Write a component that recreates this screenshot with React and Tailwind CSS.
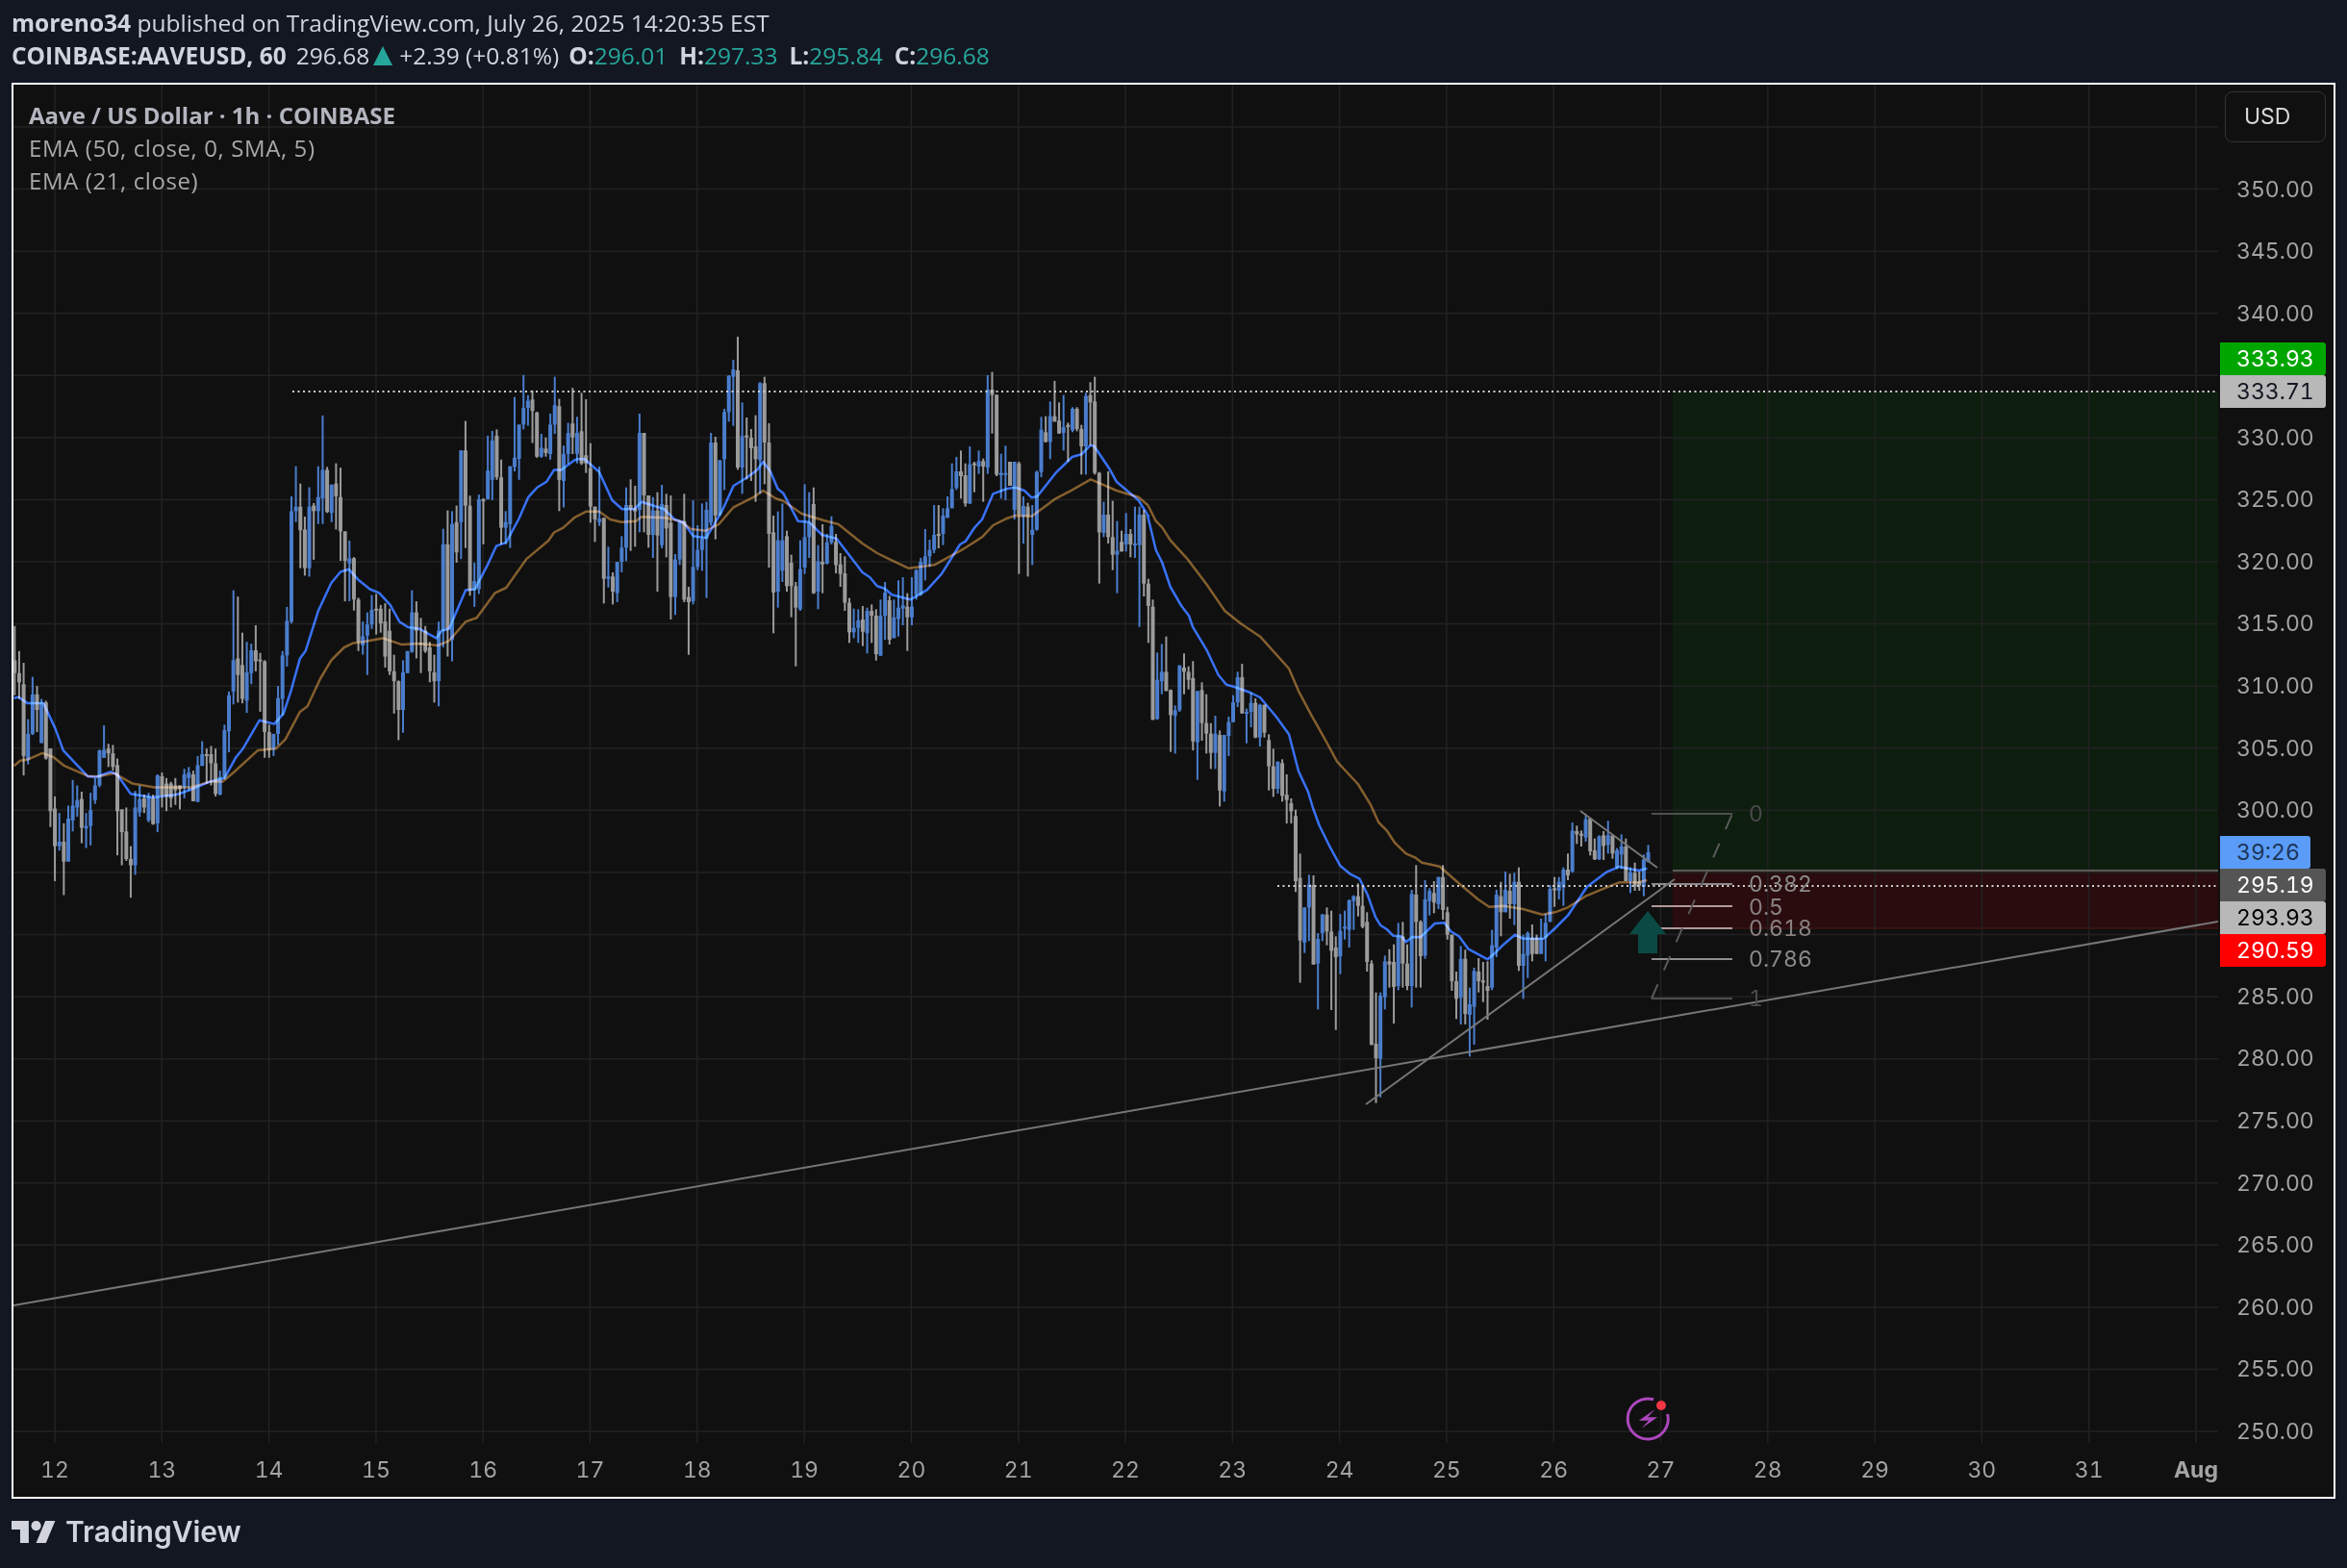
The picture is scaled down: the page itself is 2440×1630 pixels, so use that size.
import React from 'react';

// candles read off the chart: [x, high, bodyTop, bodyBottom, low, up]
const segA = [
  [40,812,905,940,1000,0],[52,880,940,965,1010,0],[65,912,970,1165,1218,0],[78,1065,1105,1175,1188,1],[89,950,998,1105,1108,1],[101,975,998,1040,1100,0],
  [114,1010,1020,1130,1130,1],[126,1015,1020,1172,1175,0],[138,1145,1145,1315,1358,0],[150,1275,1308,1410,1505,0],[162,1320,1398,1410,1422,1],[175,1348,1398,1452,1543,0],
  [186,1300,1335,1452,1452,1],[198,1230,1300,1340,1370,1],[210,1245,1285,1305,1330,1],[222,1262,1282,1360,1402,0],[235,1320,1355,1362,1415,1],[247,1265,1312,1355,1408,1],
  [259,1225,1245,1285,1295,1],[271,1148,1150,1245,1250,1],[282,1082,1148,1170,1170,1],[295,1132,1145,1158,1195,0],[308,1135,1158,1195,1205,0],[319,1172,1190,1315,1435,0],
  [332,1310,1310,1372,1462,0],[344,1305,1370,1445,1450,0],[356,1410,1445,1462,1550,0],[368,1260,1305,1462,1488,1],[381,1245,1282,1318,1330,1],[392,1270,1280,1305,1320,0],
  [405,1265,1275,1340,1345,1],[416,1270,1280,1350,1352,0],[428,1215,1218,1348,1372,1],[441,1210,1220,1272,1305,0],[452,1225,1240,1275,1315,0],[464,1235,1240,1280,1305,0],
  [476,1225,1245,1258,1298,0],[488,1245,1245,1255,1310,0],[500,1200,1215,1250,1280,1],[513,1195,1210,1225,1260,1],[525,1205,1215,1288,1288,0],[538,1165,1190,1290,1290,1],
  [549,1125,1160,1192,1192,1],[562,1145,1160,1165,1240,0],[574,1138,1160,1185,1245,0],[586,1145,1185,1268,1275,0],[598,1205,1222,1270,1272,1],[611,1080,1095,1222,1228,1],
  [623,990,1000,1098,1155,1],[635,715,905,990,1025,1],[647,732,900,945,1020,0],[659,830,918,1010,1022,0],[671,855,938,1015,1048,1],[683,860,878,940,970,1],
  [695,810,878,908,935,0],[707,885,903,907,1045,0],[719,905,908,1100,1170,0],[731,1080,1100,1148,1170,0],[744,1105,1105,1145,1165,1],[755,975,1008,1105,1135,1],
  [768,880,892,1010,1055,1],[781,760,798,892,922,1],[792,460,500,800,805,1],[804,378,488,500,530,1],[815,425,488,552,655,0],[828,515,550,655,675,0],
  [840,435,488,655,678,1],[852,478,485,500,632,0],[865,378,462,500,535,1],[878,240,388,465,535,1],[890,380,388,502,505,0],[902,428,428,505,530,1],
  [915,370,425,460,550,0],[927,382,462,555,635,0],[939,555,555,635,745,0],[950,580,628,642,745,1],[962,625,628,740,770,0],[975,735,740,855,880,0],
  [987,800,840,865,890,1],[998,775,808,838,945,1],[1010,728,768,808,820,1],[1022,725,765,770,835,0],[1035,755,765,805,830,0],[1048,750,800,895,925,0],
  [1059,765,825,935,945,0],[1071,890,935,962,1050,0],[1083,960,962,1040,1122,0],[1095,905,938,1040,1102,1],[1108,880,880,940,940,1],[1119,715,775,882,885,1],
  [1131,745,775,825,900,0],[1144,790,858,860,940,0],[1155,812,825,880,885,0],[1167,855,870,935,965,0],[1180,890,938,962,1020,0],[1192,800,825,962,1030,1],
  [1203,548,590,825,870,1],[1215,498,590,820,895,0],[1228,500,535,850,908,1],[1240,485,530,612,640,0],[1252,335,335,530,630,1],[1264,255,335,485,600,0],
  [1277,458,485,715,730,0],[1288,640,690,715,760,1],[1301,455,468,712,725,1],[1313,465,468,470,590,0],[1325,295,390,468,468,1],[1336,282,308,415,470,1],
  [1349,278,295,408,415,0],[1361,360,408,545,590,0],[1373,500,530,545,590,1],[1385,378,378,535,600,1],[1397,190,355,380,392,1],[1409,265,265,358,415,1],
  [1421,130,220,265,278,1],[1433,185,200,220,268,1],[1445,172,197,228,315,0],[1457,230,232,352,355,0],[1470,290,328,352,355,1],[1482,300,330,342,352,0],
  [1494,235,265,345,360,1],[1507,135,212,265,290,1],[1519,195,215,415,500,0],[1531,322,345,418,490,1],[1543,260,288,345,372,1],[1555,165,262,300,345,0],
];

const segB = [
  [0,280,330,395,425,1],[12,205,325,425,430,0],[24,225,400,425,455,0],[36,362,440,560,610,0],[48,560,560,600,670,0],[60,435,598,608,620,1],
  [72,595,595,785,862,0],[84,685,778,785,812,1],[96,765,778,825,865,0],[108,732,732,830,858,1],[120,652,688,732,765,1],[132,500,555,688,730,1],
  [145,475,555,568,698,0],[157,495,565,575,685,0],[170,270,330,570,640,1],[180,330,330,525,640,0],[193,525,525,648,688,0],[205,530,572,648,720,1],
  [217,515,572,650,825,0],[229,492,552,680,690,1],[241,520,555,628,718,0],[254,525,610,842,912,0],[266,708,725,842,898,1],[278,605,605,725,742,1],
  [290,520,605,850,858,0],[303,810,842,858,1022,0],[314,540,748,855,865,1],[326,618,695,748,758,1],[339,550,660,695,760,1],[350,545,570,660,845,1],
  [363,330,360,610,620,1],[376,342,360,588,662,0],[387,415,415,585,590,1],[400,255,265,412,508,1],[413,150,152,265,295,1],[424,102,132,155,308,1],
  [436,30,135,438,445,0],[447,235,340,438,520,1],[459,282,338,342,475,0],[472,318,345,378,480,0],[484,275,372,412,545,0],[497,172,175,415,520,1],
  [510,155,175,360,490,0],[520,300,360,645,750,0],[533,588,640,828,955,0],[546,575,665,825,875,1],[556,550,665,760,795,1],[569,635,652,808,825,0],
  [581,710,735,808,905,0],[593,795,808,875,1058,0],[606,665,755,880,885,1],[617,490,655,750,770,1],[630,515,610,655,720,1],[642,500,552,830,832,0],
  [654,680,730,825,880,1],[667,615,732,740,830,0],[680,645,672,738,740,1],[690,590,620,672,678,1],[703,645,670,742,768,0],[715,705,740,770,810,0],
  [727,715,768,860,885,0],[739,845,860,952,985,0],[750,878,938,952,970,1],[763,880,915,938,985,1],[776,870,912,950,995,0],[787,875,885,955,1018,1],
  [800,865,885,900,985,0],[812,880,900,1020,1040,0],[823,850,900,1025,1025,1],[836,795,828,900,975,1],[847,838,852,975,990,0],[860,850,905,970,970,1],
  [872,790,875,910,965,1],[884,780,868,878,930,1],[896,830,872,905,1010,0],[908,780,872,905,930,1],[920,755,758,835,850,1],[932,720,732,835,838,1],
  [945,630,715,740,790,1],[956,663,695,715,748,1],[968,555,648,695,705,1],[980,555,645,650,690,0],[993,565,588,645,680,1],[1005,528,565,595,595,1],
  [1017,425,505,565,565,1],[1029,405,450,502,508,1],[1042,385,450,465,535,0],[1053,425,462,550,560,0],[1065,372,428,550,552,1],[1079,420,425,428,515,0],
  [1090,385,418,435,458,1],[1103,410,418,435,545,0],[1113,150,195,438,458,1],[1126,140,195,212,332,0],[1138,210,212,460,465,0],[1150,395,455,462,535,1],
  [1162,370,455,460,540,1],[1176,420,420,495,495,0],[1187,420,420,570,600,1],[1199,420,425,585,770,0],[1212,528,558,590,675,1],[1224,548,560,590,778,0],
  [1236,555,632,648,742,1],[1246,448,452,632,635,1],[1259,280,320,452,468,1],[1272,278,328,358,360,0],[1284,232,278,358,412,1],[1296,168,278,295,295,0],
  [1308,235,292,332,332,0],[1320,212,312,330,385,1],[1332,298,305,312,420,0],[1345,250,255,322,328,1],[1357,250,255,318,325,0],[1369,305,318,372,460,0],
  [1380,205,215,372,460,1],[1393,172,212,235,370,0],[1405,155,232,455,460,0],[1417,452,455,640,800,0],[1430,545,585,642,655,1],[1442,450,585,655,675,0],
  [1453,542,655,710,758,0],[1465,605,698,710,830,1],[1478,635,670,700,700,0],[1490,580,645,678,700,1],[1502,630,645,678,718,0],[1514,560,675,678,720,1],
  [1527,560,585,680,935,1],[1539,570,585,800,840,0],[1551,785,800,870,985,0],[1563,850,872,1225,1225,0],
];

const segC = [
  [308,1015,1100,1222,1225,1],[321,988,1075,1105,1145,1],[335,965,1075,1135,1135,0],[350,1130,1132,1210,1325,0],[363,1180,1195,1212,1330,1],[378,1055,1055,1195,1200,1],
  [390,1018,1062,1075,1145,0],[405,1058,1075,1100,1130,0],[419,1042,1095,1292,1320,0],[432,1135,1135,1295,1412,1],[446,1108,1132,1235,1290,0],[462,1145,1235,1268,1330,0],
  [474,1235,1268,1328,1378,0],[489,1212,1268,1328,1378,1],[503,1258,1272,1445,1495,0],[516,1272,1272,1448,1480,1],[530,1215,1232,1275,1338,1],[543,1148,1170,1232,1232,1],
  [558,1075,1092,1170,1185,1],[572,1050,1092,1205,1205,0],[585,1190,1200,1205,1298,1],[600,1140,1172,1200,1248,1],[614,1158,1172,1280,1282,0],[628,1175,1178,1280,1308,1],
  [642,1178,1178,1265,1280,0],[657,1270,1288,1370,1445,0],[670,1315,1370,1440,1465,0],[684,1355,1355,1440,1455,1],[696,1348,1360,1462,1480,0],
];

const segD = [
  [110,15,78,95,168,0],[124,90,105,130,168,0],[138,125,145,348,382,0],[152,262,338,533,665,0],[167,430,430,540,572,1],[180,328,358,430,535,1],
  [194,330,360,608,608,0],[209,510,528,605,748,1],[222,450,452,510,535,1],[236,430,452,505,548,0],[249,440,505,565,750,0],[264,520,555,585,812,0],
  [278,450,503,582,638,1],[292,440,490,495,530,1],[306,405,408,500,555,1],[320,392,395,410,500,1],[334,355,395,425,458,0],[348,360,425,490,495,0],
  [362,445,475,600,630,0],[376,595,605,858,860,0],[389,695,855,900,1040,0],[402,695,705,902,1022,1],[416,580,598,710,748,1],[431,560,598,608,680,0],
  [444,545,600,678,792,0],[459,478,520,675,688,1],[473,475,520,605,680,0],[486,545,605,675,688,0],[500,375,388,675,742,1],[515,298,390,475,680,0],
  [528,470,475,582,680,0],[542,345,405,580,590,1],[555,370,378,410,455,1],[570,348,385,415,448,0],[584,335,335,420,435,1],[597,298,335,438,468,0],
  [612,428,445,515,530,0],[626,515,515,660,690,0],[640,630,660,715,778,0],[654,550,590,712,795,1],[668,562,590,762,795,0],[682,680,732,765,895,1],
  [695,618,628,740,858,1],[708,588,630,660,695,0],[722,600,658,662,725,0],[737,598,675,690,780,0],[749,500,548,680,688,1],[764,375,390,555,585,1],
  [778,350,395,445,520,0],[792,318,375,445,445,1],[806,325,378,420,465,0],[820,322,350,420,485,1],[834,305,350,612,628,0],[848,515,575,612,715,1],
  [861,505,510,580,650,1],[875,483,525,575,598,0],[890,515,525,575,575,0],[903,465,525,575,575,1],[917,450,478,525,598,1],[932,360,372,475,475,1],
  [945,335,370,375,428,0],[960,335,350,378,405,1],[973,305,312,368,425,1],[987,262,312,330,345,0],[1001,165,190,318,322,1],[1014,175,192,202,232,0],
  [1028,190,200,205,240,0],[1043,138,155,212,225,1],[1056,150,152,255,268,0],[1070,215,252,280,282,0],[1085,205,208,280,282,1],[1098,192,205,238,282,0],
  [1112,160,205,235,262,1],[1126,205,205,262,278,0],[1140,245,252,305,310,1],[1154,202,240,265,310,1],[1167,215,240,348,348,0],[1182,305,320,348,385,1],
  [1196,290,322,365,378,0],[1210,318,350,362,378,0],[1224,265,280,365,395,1],[1239,235,258,288,290,1],
];

const toPage = (ox, oy, sx, sy, rows) =>
  rows.map(([x, h, t, b, l, up]) => ({
    x: 15.3 + 4.64 * Math.round((ox + x / sx - 15.3) / 4.64),
    h: oy + h / sy,
    t: oy + t / sy,
    b: oy + b / sy,
    l: oy + l / sy,
    up,
  }));

const candles = [
  ...toPage(0, 340, 2.613, 2.613, segA),
  ...toPage(600, 340, 2.613, 3, segB),
  ...toPage(1100, 340, 3, 3, segC),
  ...toPage(1300, 800, 3, 3, segD),
];

const pts = (ox, oy, sx, sy, rows) => rows.map(([x, y]) => `${(ox + x / sx).toFixed(1)},${(oy + y / sy).toFixed(1)}`).join(' ');

const ema50 = [
  pts(0, 340, 2.613, 2.613, [[38,1008],[50,1005],[75,1022],[118,1022],[150,1090],[172,1150],[238,1220],[262,1222],[300,1208],[318,1215],[355,1268],[415,1278],[480,1270],[515,1258],[570,1235],[610,1225],[640,1170],[660,1145],[705,1068],[745,1078],[770,1050],[790,990],[815,900],[830,880],[865,770],[900,695],[925,665],[948,658],[975,688],[1005,712],[1030,722],[1060,755],[1085,800],[1108,815],[1140,820],[1185,845],[1200,825],[1220,820],[1265,715],[1290,712],[1325,645],[1348,595],[1375,585],[1410,520],[1435,462],[1460,435],[1485,420],[1505,388],[1525,388],[1560,362]]),
  pts(600, 340, 2.613, 3, [[0,412],[20,412],[60,452],[95,540],[122,568],[155,568],[175,545],[235,567],[265,600],[290,610],[315,652],[350,658],[370,620],[395,570],[425,495],[460,470],[490,445],[505,420],[525,450],[545,505],[560,518],[600,605],[630,608],[665,648],[705,660],[735,705],[775,765],[795,780],[815,808],[835,815],[855,835],[905,850],[950,820],[990,770],[1040,678],[1055,668],[1080,625],[1100,600],[1130,520],[1165,505],[1190,500],[1215,510],[1235,532],[1250,528],[1300,455],[1345,405],[1370,397],[1395,368],[1405,372],[1445,440],[1465,482],[1525,540],[1552,590]]),
  pts(1100, 340, 3, 3, [[280,590],[305,695],[325,735],[350,810],[385,870],[408,900],[420,935],[465,1010],[500,1085],[525,1115],[550,1122],[600,1140],[630,1155],[680,1215],[720,1270],[750,1385],[780,1450]]),
  pts(1300, 800, 3, 3, [[195,120],[215,175],[250,245],[280,300],[310,325],[340,340],[365,390],[390,460],[405,485],[425,498],[445,518],[470,520],[485,538],[505,522],[530,523],[575,480],[605,478],[625,505],[650,520],[680,560],[740,592],[765,570],[790,545],[825,515],[850,527],[915,527],[950,495],[990,455],[1020,410],[1050,365],[1110,320],[1150,303],[1210,315],[1237,308]]),
].join(' ');

const ema21 = [
  pts(0, 340, 2.613, 2.613, [[38,1192],[55,1178],[75,1175],[115,1157],[145,1168],[175,1192],[240,1220],[270,1220],[310,1212],[360,1240],[420,1250],[520,1250],[570,1235],[605,1235],[640,1205],[700,1150],[750,1145],[775,1120],[815,1045],[835,1030],[870,955],[900,905],[935,870],[960,858],[985,855],[1040,845],[1090,862],[1140,860],[1190,865],[1220,852],[1265,800],[1295,790],[1345,722],[1375,708],[1430,630],[1490,580],[1505,558],[1530,545],[1560,518]]),
  pts(600, 340, 2.613, 3, [[0,590],[25,575],[60,575],[90,600],[120,608],[160,605],[175,592],[240,595],[280,605],[310,630],[350,635],[385,615],[425,562],[480,530],[505,510],[540,535],[560,542],[610,582],[670,603],[710,615],[775,675],[815,705],[850,725],[900,752],[970,742],[1045,695],[1100,655],[1130,618],[1165,598],[1190,588],[1235,590],[1300,535],[1345,508],[1395,475],[1465,510],[1525,530],[1550,555]]),
  pts(1100, 340, 3, 3, [[280,555],[305,605],[325,625],[350,665],[405,725],[465,805],[520,885],[570,925],[630,965],[720,1065],[750,1135],[790,1210],[835,1290],[870,1355]]),
  pts(1300, 800, 3, 3, [[293,0],[335,45],[375,110],[400,165],[425,190],[450,228],[485,262],[515,275],[535,290],[590,302],[650,355],[710,405],[745,428],[790,425],[850,435],[910,452],[950,445],[990,430],[1045,395],[1110,368],[1150,352],[1210,352],[1237,345]]),
].join(' ');

// empty rows are the ticks hidden behind the price badges
const priceTicks = ['350.00','345.00','340.00','','330.00','325.00','320.00','315.00','310.00','305.00','300.00','','','285.00','280.00','275.00','270.00','265.00','260.00','255.00','250.00'];
const days = ['12','13','14','15','16','17','18','19','20','21','22','23','24','25','26','27','28','29','30','31','Aug'];
const fibLevels = [
  { y: 846, c: '#4f4f4f' },
  { y: 919, c: '#8a8a8a' },
  { y: 942, c: '#b09a9a' },
  { y: 965, c: '#b09a9a' },
  { y: 997, c: '#8f8f8f' },
  { y: 1038, c: '#4f4f4f' },
];

function ChartDrawing() {
  return (
    <svg className="block" width="2292" height="1412" viewBox="14 88 2292 1412">
      <rect x="1739" y="407" width="567" height="498" fill="#0d1e0e" />
      <rect x="1739" y="905" width="567" height="60" fill="#2a0c0e" />
      {days.map((d, i) => (
        <line key={d} x1={57 + 111.3 * i} x2={57 + 111.3 * i} y1="88" y2="1500" stroke="#222222" strokeWidth="1.5" />
      ))}
      {Array.from({ length: 22 }, (_, i) => (
        <line key={i} x1="14" x2="2306" y1={132 + 64.575 * i} y2={132 + 64.575 * i} stroke="#222222" strokeWidth="1.5" />
      ))}
      <line x1="1739" x2="2306" y1="905" y2="905" stroke="#5c5a56" strokeWidth="2" />
      <line x1="1739" x2="2306" y1="965" y2="965" stroke="#3f1416" strokeWidth="1.5" />
      {candles.map((c, i) => {
        const col = c.up ? '#4a7dcc' : '#9b9b9b';
        return (
          <g key={i} fill={col}>
            <rect x={c.x - 1} y={c.h} width="2" height={Math.max(c.l - c.h, 1)} />
            <rect x={c.x - 2} y={c.t} width="4" height={Math.max(c.b - c.t, 2)} />
          </g>
        );
      })}
      <polyline className="mix-blend-screen" points={ema21} fill="none" stroke="#7c5420" strokeWidth="2.5" strokeLinejoin="round" />
      <polyline className="mix-blend-screen" points={ema50} fill="none" stroke="#2b68f5" strokeWidth="2.5" strokeLinejoin="round" />
      <line x1="304" x2="2306" y1="407" y2="407" stroke="#cfcfcf" strokeWidth="2" strokeDasharray="2 3.5" />
      <line x1="1328" x2="2306" y1="921" y2="921" stroke="#cfcfcf" strokeWidth="2" strokeDasharray="2 3.5" />
      {fibLevels.map((l) => (
        <line key={l.y} x1="1717" x2="1801" y1={l.y} y2={l.y} stroke={l.c} strokeWidth="2" />
      ))}
      <line x1="1717" y1="1038" x2="1801" y2="846" stroke="#5a5a5a" strokeWidth="2" strokeDasharray="16 16" />
      <line x1="14" y1="1357" x2="2306" y2="958" stroke="#767676" strokeWidth="2" />
      <line x1="1420" y1="1148" x2="1741" y2="914" stroke="#767676" strokeWidth="2" />
      <line x1="1643" y1="843" x2="1723" y2="902" stroke="#767676" strokeWidth="2" />
      <polygon points="1713,947 1732,971 1723,971 1723,991 1703,991 1703,971 1694,971" fill="#0b4a44" />
      <path d="M1719 1454.8A21 21 0 1 0 1733.6 1470" fill="none" stroke="#ab47bc" strokeWidth="3" />
      <polygon points="1720.6,1465 1703.8,1476.7 1714,1476.7 1706.3,1485 1723.2,1473.3 1713,1473.3" fill="#ab47bc" />
      <circle cx="1727" cy="1461" r="5" fill="#f23645" />
    </svg>
  );
}

export default function App() {
  return (
    <div className="w-[2440px] h-[1630px] bg-[#131722] text-[#d1d4dc] overflow-hidden font-['Open_Sans',sans-serif]">
      {/* published-by header */}
      <header className="pl-3 pt-[7px] h-[86px] text-[24.5px] leading-[34px]">
        <div><b className="font-bold">moreno34</b> published on TradingView.com, July 26, 2025 14:20:35 EST</div>
        <div className="flex items-center whitespace-pre">
          <b className="font-bold">COINBASE:AAVEUSD, 60</b>
          <span className="ml-[10px]">296.68</span>
          <svg className="ml-[4px] mr-[7px]" width="20" height="20" viewBox="0 0 20 20"><polygon points="10,0 20,20 0,20" fill="#26a69a" /></svg>
          <span>+2.39 (+0.81%)</span>
          <b className="font-bold ml-[10px]">O:</b><span className="text-[#26a69a]">296.01</span>
          <b className="font-bold ml-[12px]">H:</b><span className="text-[#26a69a]">297.33</span>
          <b className="font-bold ml-[12px]">L:</b><span className="text-[#26a69a]">295.84</span>
          <b className="font-bold ml-[12px]">C:</b><span className="text-[#26a69a]">296.68</span>
        </div>
      </header>

      {/* chart frame */}
      <div className="mx-3 border-2 border-white bg-[#101010] h-[1472px] flex flex-col font-['Inter',sans-serif] text-[23px] tabular-nums">
        <div className="flex h-[1412px]">
          <div className="relative w-[2292px]">
            <ChartDrawing />
            <div className="absolute left-[16px] top-[15px] text-[#b2b5be] font-['Open_Sans',sans-serif] text-[24px] leading-[34px]">
              <div className="font-bold">Aave / US Dollar · 1h · COINBASE</div>
              <div className="text-[#a8a8a8] tracking-[0.6px]">EMA (50, close, 0, SMA, 5)</div>
              <div className="text-[#a8a8a8] tracking-[0.6px]">EMA (21, close)</div>
            </div>
            <span className="absolute left-[1804px] top-[749px] leading-[18px] text-[#4a4a4a]">0</span>
            <span className="absolute left-[1804px] top-[822px] leading-[18px] text-[#8a8a8a]">0.382</span>
            <span className="absolute left-[1804px] top-[846px] leading-[18px] text-[#8a8080]">0.5</span>
            <span className="absolute left-[1804px] top-[868px] leading-[18px] text-[#8a8080]">0.618</span>
            <span className="absolute left-[1804px] top-[900px] leading-[18px] text-[#8a8a8a]">0.786</span>
            <span className="absolute left-[1804px] top-[941px] leading-[18px] text-[#4a4a4a]">1</span>
          </div>

          {/* price axis */}
          <div className="relative flex-1 pt-[7px] text-[#a3a3a3]">
            <div className="ml-[7px] w-[105px] h-[53px] mb-[16.5px] border border-[#333333] rounded-[8px] pl-[19px] flex items-center text-[#d8d8d8]">USD</div>
            {priceTicks.map((p, i) => (
              <div key={i} className="h-[64.575px] pl-[19px] flex items-center">{p}</div>
            ))}
            <div className="absolute left-[2px] top-[268px] w-[110px] h-[34px] pl-[17px] flex items-center rounded-r-[3px] bg-[#00a600] text-white">333.93</div>
            <div className="absolute left-[2px] top-[302px] w-[110px] h-[34px] pl-[17px] flex items-center rounded-r-[3px] bg-[#b8b8b8] text-[#131722]">333.71</div>
            <div className="absolute left-[2px] top-[781px] w-[94px] h-[34px] pl-[17px] flex items-center rounded-r-[3px] bg-[#5a9cf8] text-[#1c3558]">39:26</div>
            <div className="absolute left-[2px] top-[815px] w-[110px] h-[34px] pl-[17px] flex items-center rounded-r-[3px] bg-[#555555] text-white">295.19</div>
            <div className="absolute left-[2px] top-[849px] w-[110px] h-[34px] pl-[17px] flex items-center rounded-r-[3px] bg-[#b8b8b8] text-black">293.93</div>
            <div className="absolute left-[2px] top-[883px] w-[110px] h-[34px] pl-[17px] flex items-center rounded-r-[3px] bg-[#ff0000] text-white">290.59</div>
          </div>
        </div>

        {/* time axis */}
        <div className="flex h-[56px] -ml-[12.65px] text-[#a3a3a3]">
          {days.map((d) => (
            <div key={d} className={d === 'Aug' ? 'w-[111.3px] shrink-0 flex items-center justify-center font-bold' : 'w-[111.3px] shrink-0 flex items-center justify-center'}>{d}</div>
          ))}
        </div>
      </div>

      {/* logo */}
      <footer className="flex items-center pl-3 pt-[19px] gap-[10px] text-[#d1d4dc]">
        <svg width="46" height="23" viewBox="0 4 36 18" fill="currentColor">
          <path d="M14 22H7V11H0V4h14v18zM28 22h-8l7.5-18h8L28 22z" />
          <circle cx="20" cy="8" r="4" />
        </svg>
        <span className="font-['Inter',sans-serif] font-semibold text-[30px] leading-[30px]">TradingView</span>
      </footer>
    </div>
  );
}
